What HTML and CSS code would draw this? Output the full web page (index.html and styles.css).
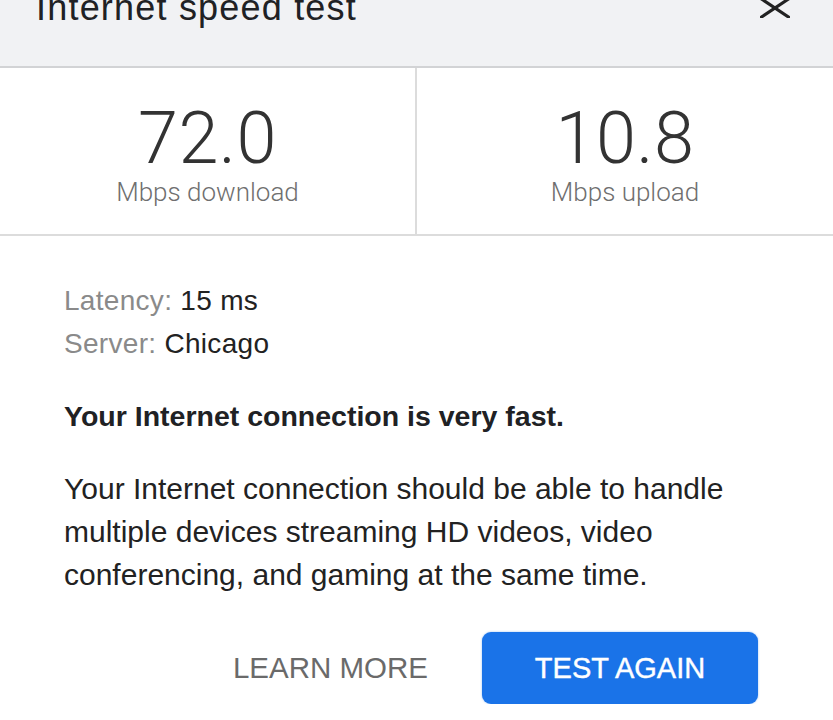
FILE: index.html
```html
<!DOCTYPE html>
<html lang="en">
<head>
<meta charset="utf-8">
<title>Internet speed test</title>
<link rel="stylesheet" href="styles.css">
</head>
<body>
<div class="dialog">
  <header class="header">
    <h1 class="title">Internet speed test</h1>
    <button class="close" aria-label="Close">
      <svg width="30" height="20" viewBox="0 0 30 20" aria-hidden="true">
        <path d="M1.5 1 L28.5 19 M28.5 1 L1.5 19" stroke="#222" stroke-width="3.2" stroke-linecap="round" fill="none"/>
      </svg>
    </button>
  </header>

  <section class="stats">
    <div class="stat">
      <div class="stat-value">72.0</div>
      <div class="stat-label">Mbps download</div>
    </div>
    <div class="stat stat-right">
      <div class="stat-value">10.8</div>
      <div class="stat-label">Mbps upload</div>
    </div>
  </section>

  <section class="info">
    <div class="meta">
      <div class="meta-row"><span class="meta-key">Latency:</span> <span class="meta-val">15 ms</span></div>
      <div class="meta-row"><span class="meta-key">Server:</span> <span class="meta-val">Chicago</span></div>
    </div>
    <p class="verdict">Your Internet connection is very fast.</p>
    <p class="desc">Your Internet connection should be able to handle multiple devices streaming HD videos, video conferencing, and gaming at the same time.</p>
  </section>

  <div class="actions">
    <button class="btn-text">LEARN MORE</button>
    <button class="btn-primary">TEST AGAIN</button>
  </div>
</div>
</body>
</html>
```

FILE: styles.css
```css
html, body {
  margin: 0;
  padding: 0;
  background: #ffffff;
}

body {
  font-family: "Liberation Sans", Arial, sans-serif;
  color: #202124;
  overflow: hidden;
}

.dialog {
  width: 833px;
}

.header {
  display: flex;
  align-items: flex-start;
  justify-content: space-between;
  height: 66px;
  background: #f1f2f4;
  border-bottom: 2px solid #d2d3d5;
  padding: 0 43px 0 36px;
  overflow: hidden;
}

.title {
  margin: -12px 0 0 0;
  font-size: 36px;
  line-height: 40px;
  font-weight: 400;
  letter-spacing: 1.2px;
  color: #202124;
}

.close {
  margin: -2px 0 0 0;
  padding: 0;
  border: 0;
  background: none;
  width: 30px;
  height: 20px;
  display: block;
}

.close svg {
  display: block;
}

.stats {
  display: grid;
  grid-template-columns: 415px 1fr;
  border-bottom: 2px solid #dcdcdc;
}

.stat {
  display: flex;
  flex-direction: column;
  align-items: center;
  padding: 31px 0 29px;
}

.stat-right {
  border-left: 2px solid #dcdcdc;
}

.stat-value {
  font-family: Roboto, "Liberation Sans", sans-serif;
  font-weight: 300;
  font-size: 72px;
  line-height: 80px;
  color: #333333;
  letter-spacing: 0.5px;
}

.stat-label {
  font-family: Roboto, "Liberation Sans", sans-serif;
  font-weight: 300;
  font-size: 26px;
  line-height: 26px;
  color: #6f6f6f;
}

.info {
  padding: 43px 69px 0 64px;
}

.meta-row {
  font-size: 28px;
  line-height: 43px;
  letter-spacing: 0.3px;
}

.meta-key {
  color: #8a8a8a;
}

.meta-val {
  color: #222222;
}

.verdict {
  margin: 30px 0 0 0;
  font-size: 28.5px;
  line-height: 43px;
  font-weight: 700;
  color: #202124;
}

.desc {
  margin: 29px 0 0 0;
  font-size: 30px;
  line-height: 43px;
  color: #222222;
}

.actions {
  display: flex;
  justify-content: flex-end;
  align-items: center;
  gap: 54px;
  padding: 36px 75px 0 0;
}

.btn-text {
  border: 0;
  background: none;
  padding: 0;
  font-family: "Liberation Sans", Arial, sans-serif;
  font-size: 29.5px;
  line-height: 72px;
  color: #6a6a6a;
}

.btn-primary {
  width: 276px;
  height: 72px;
  border: 0;
  border-radius: 9px;
  background: #1a73e8;
  color: #ffffff;
  font-family: "Liberation Sans", Arial, sans-serif;
  font-size: 29px;
  line-height: 72px;
  padding: 0;
  -webkit-text-stroke: 0.4px #ffffff;
  box-shadow: 0 0 2px rgba(26, 115, 232, 0.5);
}
```
